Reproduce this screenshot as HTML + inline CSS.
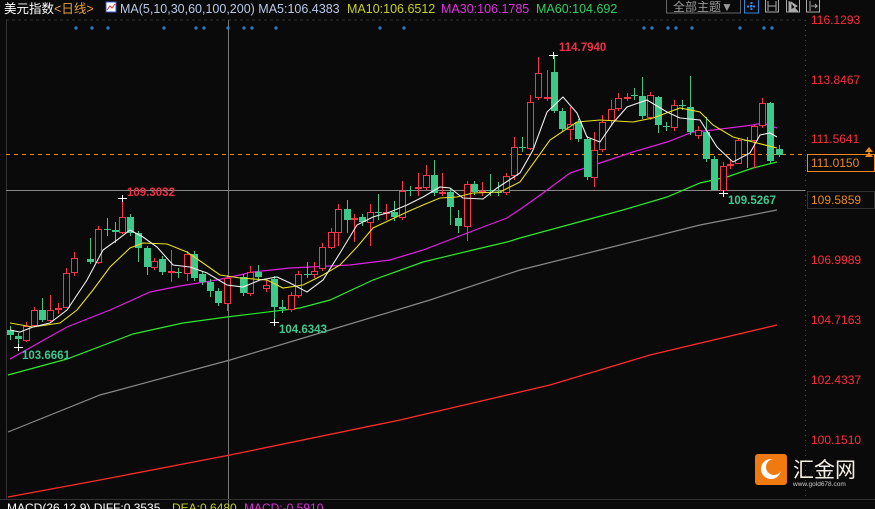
<!DOCTYPE html>
<html><head><meta charset="utf-8"><style>
body{margin:0;background:#0a0a0a;width:875px;height:509px;overflow:hidden;font-family:"Liberation Sans","Noto Sans CJK SC",sans-serif}
</style></head><body>
<svg id="s" width="875" height="509" xmlns="http://www.w3.org/2000/svg" style="position:absolute;left:0;top:0">
<rect width="875" height="509" fill="#0a0a0a"/>
<line x1="6" y1="20" x2="805" y2="20" stroke="#333" stroke-dasharray="3,3"/>
<line x1="805.5" y1="20" x2="805.5" y2="500" stroke="#444" stroke-dasharray="1,4"/>
<line x1="6.5" y1="20" x2="6.5" y2="500" stroke="#333"/>
<line x1="228.5" y1="20" x2="228.5" y2="509" stroke="#777"/>
<line x1="6" y1="190.5" x2="805" y2="190.5" stroke="#888"/>
<line x1="6" y1="154.5" x2="805" y2="154.5" stroke="#f08a20" stroke-dasharray="4,4"/>
<line x1="0" y1="499.5" x2="875" y2="499.5" stroke="#333"/>
<g id="dots" fill="#2a7fd0"></g>
<polyline fill="none" stroke="#ff2a2a" stroke-width="1.3" points="8,497 100,480 230,455 400,420 550,385 650,355 777,325"/>
<polyline fill="none" stroke="#888" stroke-width="1.2" points="8,432 100,395 230,360 330,330 430,300 520,270 600,250 700,225 777,210"/>
<polyline fill="none" stroke="#2ee82e" stroke-width="1.2" points="8,375 67,359 133,334 183,323 227,317 300,308 330,300 373,280 423,262 473,250 507,242 520,238 623,210 667,197 700,183 727,177 753,168 777,162"/>
<polyline fill="none" stroke="#e020e0" stroke-width="1.2" points="10,359 67,327 110,310 150,292 180,286 217,280 253,272 290,268 350,265 390,260 423,250 457,237 483,227 507,218 522,208 543,193 570,173 600,163 633,152 667,142 693,132 713,130 753,125 763,123 777,128"/>
<g id="c"></g>
<polyline fill="none" stroke="#e8e020" stroke-width="1.1" points="10,323 33,327 60,323 77,310 93,290 110,267 130,248 143,243 167,244 187,252 203,263 220,275 240,278 267,280 283,288 303,285 323,275 340,265 357,247 373,228 390,220 407,212 423,205 440,198 457,197 473,193 500,192 520,182 550,140 577,122 600,120 633,122 653,118 680,108 700,112 713,125 733,137 757,143 777,148"/>
<polyline fill="none" stroke="#f0f0f0" stroke-width="1.1" points="10,330 20,332 33,327 50,323 67,310 87,280 103,250 117,240 130,230 143,237 157,247 173,265 190,267 207,273 227,285 243,287 260,280 277,277 290,283 307,292 323,280 340,253 357,225 373,217 390,212 407,205 423,197 440,187 450,188 463,198 483,199 497,188 520,173 533,150 547,112 563,97 577,113 587,137 600,142 613,123 627,107 647,100 667,112 680,118 700,120 717,147 733,162 750,153 760,135 770,133 777,137"/>
<g stroke="#fff" stroke-width="1"><path d="M118 198.5h9M122.5 195v7M14 347.5h9M18.5 344v7M549 55.5h9M553.5 52v7M270 322.5h9M274.5 319v7M719 193.5h9M723.5 190v7"/></g>
<g font-size="11.5" font-weight="bold">
<text x="127" y="196" fill="#f0304a">109.3032</text>
<text x="559" y="51" fill="#f0304a">114.7940</text>
<text x="22" y="359" fill="#40c890">103.6661</text>
<text x="279" y="333" fill="#40c890">104.6343</text>
<text x="728" y="204" fill="#40c890">109.5267</text>
</g>
<g font-size="12" fill="#ff2d3d">
<text x="811" y="24">116.1293</text><text x="811" y="84">113.8467</text><text x="811" y="143">111.5641</text>
<text x="811" y="264">106.9989</text><text x="811" y="324">104.7163</text><text x="811" y="384">102.4337</text><text x="811" y="444">100.1510</text>
</g>
<rect x="807.5" y="154.5" width="67" height="17" fill="#0a0a0a" stroke="#f08a20"/>
<text x="811" y="167" font-size="12" fill="#e88a20">111.0150</text>
<rect x="807.5" y="191.5" width="67" height="17" fill="#0a0a0a" stroke="#333"/>
<text x="811" y="204" font-size="12" fill="#e88a20">109.5859</text>
<path d="M865 152l4-5 4 5zM865 157l4-5 4 5z" fill="#f08a20"/>
<text x="4" y="13" font-size="12.5" fill="#fff">美元指数<tspan fill="#e8a040">&lt;日线&gt;</tspan></text>
<rect x="106" y="2" width="10" height="10" fill="#fff" stroke="#4050c0"/><path d="M107 10l3-4 2 2 3-4" stroke="#e03030" fill="none"/>
<text x="120" y="13" font-size="12.5" fill="#b8c8e8">MA(5,10,30,60,100,200)  MA5:106.4383</text>
<text x="347" y="13" font-size="12.5" fill="#c8d020">MA10:106.6512</text>
<text x="441" y="13" font-size="12.5" fill="#e030e0">MA30:106.1785</text>
<text x="536" y="13" font-size="12.5" fill="#30d060">MA60:104.692</text>
<rect x="666.5" y="-1" width="74" height="14" fill="none" stroke="#666"/>
<text x="673" y="11" font-size="12" fill="#999">全部主题▼</text>
<rect x="744.5" y="-1" width="14" height="14" fill="none" stroke="#2a8ae0"/><path d="M751.5 2v9M747 6.5h9" stroke="#2a8ae0" stroke-width="2" stroke-dasharray="2,1"/>
<rect x="765.5" y="-1" width="13" height="13" fill="none" stroke="#aaa"/><path d="M768 1v10M776 1v10M768 6h8" stroke="#aaa"/>
<rect x="786.5" y="-1" width="13" height="13" fill="none" stroke="#aaa"/><path d="M789 1v10h9M791 2l6 4-6 4z" stroke="#aaa" fill="#aaa"/>
<rect x="806.5" y="-1" width="13" height="13" fill="none" stroke="#aaa"/><path d="M810 1v10M811 6h6l-2-2M817 6l-2 2" stroke="#aaa" fill="none"/>
<rect x="755" y="454" width="32" height="31" rx="3" fill="#f07a10"/>
<circle cx="771" cy="469" r="10" fill="#fff"/><circle cx="774" cy="467" r="8" fill="#f07a10"/>
<text x="793" y="477" font-size="21" fill="#f4eee4">汇金网</text>
<text x="793" y="486" font-size="6.5" fill="#ccc">www.gold678.com</text>
<text x="7" y="512" font-size="12" fill="#fff">MACD(26,12,9) DIFF:0.3535</text>
<text x="172" y="512" font-size="12" fill="#c8d020">DEA:0.6480</text>
<text x="244" y="512" font-size="12" fill="#e030e0">MACD:-0.5910</text>
</svg>
<script>
var D=[[10,330,335,326,340,'g'],[18,336,339,333,347,'g'],[26,326,340,322,342,'r'],[34,310,325,307,327,'r'],[42,310,320,298,322,'g'],[50,310,320,295,323,'r'],[58,308,309,303,314,'r'],[66,273,307,268,308,'r'],[74,258,272,252,276,'r'],[90,259,262,238,264,'g'],[98,229,262,226,264,'r'],[107,229,230,218,236,'g'],[115,230,232,222,243,'g'],[122,217,232,197,234,'r'],[130,217,233,214,236,'g'],[138,233,248,231,262,'g'],[147,248,267,246,275,'g'],[154,261,267,258,270,'r'],[162,259,272,256,275,'g'],[171,271,272,250,282,'r'],[178,272,273,268,278,'g'],[187,254,273,251,281,'r'],[194,254,278,251,281,'g'],[202,274,282,271,285,'g'],[210,282,291,279,297,'g'],[218,291,303,288,306,'g'],[227,278,303,275,311,'r'],[243,277,293,274,296,'g'],[250,272,293,266,296,'r'],[258,272,277,265,280,'g'],[266,285,288,280,292,'r'],[274,279,307,276,322,'g'],[282,307,309,300,313,'g'],[291,295,309,292,312,'r'],[298,274,295,271,298,'r'],[307,274,275,262,278,'g'],[314,271,274,262,278,'r'],[322,247,268,243,271,'r'],[331,232,247,228,249,'r'],[338,209,232,204,246,'r'],[347,209,220,200,233,'g'],[354,218,219,214,242,'r'],[362,217,222,214,226,'g'],[370,212,222,204,246,'r'],[378,212,213,194,220,'g'],[386,212,213,204,220,'r'],[394,212,217,201,221,'g'],[402,191,217,181,220,'r'],[410,190,191,186,196,'g'],[418,187,188,173,196,'r'],[426,175,187,165,190,'r'],[434,175,193,160,196,'g'],[442,192,193,173,196,'r'],[450,192,207,188,225,'g'],[458,218,226,210,233,'g'],[467,184,226,181,241,'r'],[474,184,192,181,195,'g'],[482,191,192,182,196,'r'],[490,190,191,174,196,'g'],[498,192,193,182,196,'g'],[506,176,192,173,195,'r'],[514,147,175,137,180,'r'],[522,147,148,137,152,'g'],[530,102,148,95,150,'r'],[538,73,97,57,100,'r'],[547,97,98,70,101,'r'],[554,72,111,55,113,'g'],[562,111,129,108,132,'g'],[570,124,129,107,140,'r'],[578,122,139,119,142,'g'],[587,139,177,136,180,'g'],[594,150,177,132,187,'r'],[602,122,149,115,152,'r'],[611,109,120,100,125,'r'],[618,98,108,93,111,'r'],[627,97,98,93,101,'r'],[634,95,96,88,100,'g'],[642,96,116,77,119,'g'],[650,95,117,92,120,'r'],[658,97,125,96,133,'g'],[666,126,127,122,131,'g'],[674,105,127,100,131,'r'],[682,105,106,100,110,'g'],[690,107,132,76,135,'g'],[698,130,135,126,139,'r'],[706,132,159,117,162,'g'],[714,159,190,156,190,'g'],[723,166,190,162,193,'r'],[730,164,165,160,169,'r'],[738,140,163,138,160,'r'],[747,140,141,137,168,'g'],[754,126,140,125,168,'r'],[762,103,125,98,128,'r'],[770,103,161,102,163,'g'],[779,149,155,145,157,'g']];
var h='';D.forEach(function(c){var x=c[0],r=c[5]=='r',col=r?'#ff3448':'#3cc98a';
h+='<line x1="'+(x+.5)+'" y1="'+c[3]+'" x2="'+(x+.5)+'" y2="'+c[4]+'" stroke="'+col+'"/>';
var y=Math.min(c[1],c[2]),hh=Math.max(1,Math.abs(c[2]-c[1]));
if(r)h+='<rect x="'+(x-2.5)+'" y="'+(y+.5)+'" width="6" height="'+hh+'" fill="#0a0a0a" stroke="'+col+'"/>';
else h+='<rect x="'+(x-3)+'" y="'+y+'" width="7" height="'+hh+'" fill="'+col+'"/>';});
document.getElementById('c').innerHTML=h;
var dx=[76,92,108,164,196,204,228,244,252,276,380,404,644,652,668,676,692,740,764,772],d='';
dx.forEach(function(x){d+='<circle cx="'+x+'" cy="28" r="1.6"/>';});
document.getElementById('dots').innerHTML=d;
</script>
</body></html>
